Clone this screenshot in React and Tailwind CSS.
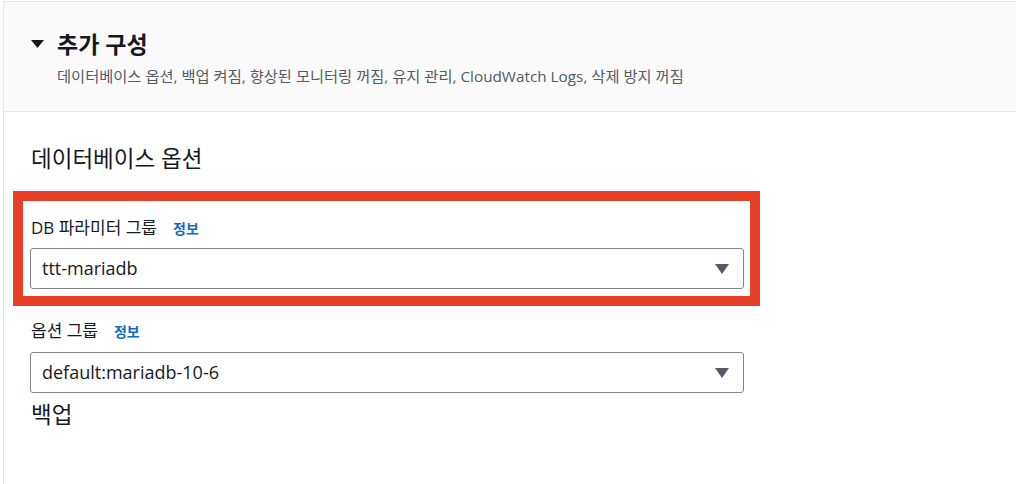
import React from 'react';

const font = { fontFamily: '"Open Sans", "Noto Sans CJK KR", sans-serif' };

function Caret() {
  return (
    <svg width="14" height="10" viewBox="0 0 14 10" className="shrink-0">
      <path d="M0 0 H14 L7 10 Z" fill="#545b64" />
    </svg>
  );
}

function Select({ value }) {
  return (
    <div className="flex items-center justify-between h-[41px] border border-[#7f8791] rounded-[3px] bg-white pl-[11px] pr-[14px]">
      <span className="text-[18px] text-[#16191f]">{value}</span>
      <Caret />
    </div>
  );
}

function FieldLabel({ children }) {
  return (
    <div className="flex items-center gap-[16px] h-[20px] pl-px">
      <span className="text-[17px] text-[#16191f]">{children}</span>
      <span className="text-[14px] font-bold text-[#0f6dba]">정보</span>
    </div>
  );
}

export default function App() {
  return (
    <div className="w-[1016px] h-[484px] bg-white pt-px overflow-hidden" style={font}>
      <div className="ml-[3px] h-full border-t border-l border-[#e3e6e8]">
        {/* -- header -- */}
        <div className="h-[110px] bg-[#fafafa] border-b border-[#e3e6e8] pl-[27px] pt-[26px]">
          <div className="flex items-center gap-[13px] h-[32px]">
            <svg width="13" height="8" viewBox="0 0 13 8">
              <path d="M0 0 H13 L6.5 8 Z" fill="#16191f" />
            </svg>
            <span className="text-[23px] font-bold text-[#16191f]">추가 구성</span>
          </div>
          <div className="ml-[26px] mt-[6px] text-[15.3px] text-[#545b64] leading-[20px]">
            데이터베이스 옵션, 백업 켜짐, 향상된 모니터링 꺼짐, 유지 관리, CloudWatch Logs, 삭제 방지 꺼짐
          </div>
        </div>

        {/* -- body -- */}
        <div className="pl-[26px] pt-[33px] w-[740px]">
          <div className="text-[22.5px] leading-[28px] text-[#16191f] pl-px">데이터베이스 옵션</div>

          <div className="mt-[18px] -ml-[17px] w-[747px] border-[10px] border-[#e84028] pt-[17px] pb-[7px] pl-[7px] pr-[6px]">
            <FieldLabel>DB 파라미터 그룹</FieldLabel>
            <div className="mt-[10px]">
              <Select value="ttt-mariadb" />
            </div>
          </div>

          <div className="mt-[15px]">
            <FieldLabel>옵션 그룹</FieldLabel>
          </div>
          <div className="mt-[11px] w-[714px]">
            <Select value="default:mariadb-10-6" />
          </div>

          <div className="mt-[8px] text-[22.5px] leading-[28px] text-[#16191f] pl-px">백업</div>
        </div>
      </div>
    </div>
  );
}
